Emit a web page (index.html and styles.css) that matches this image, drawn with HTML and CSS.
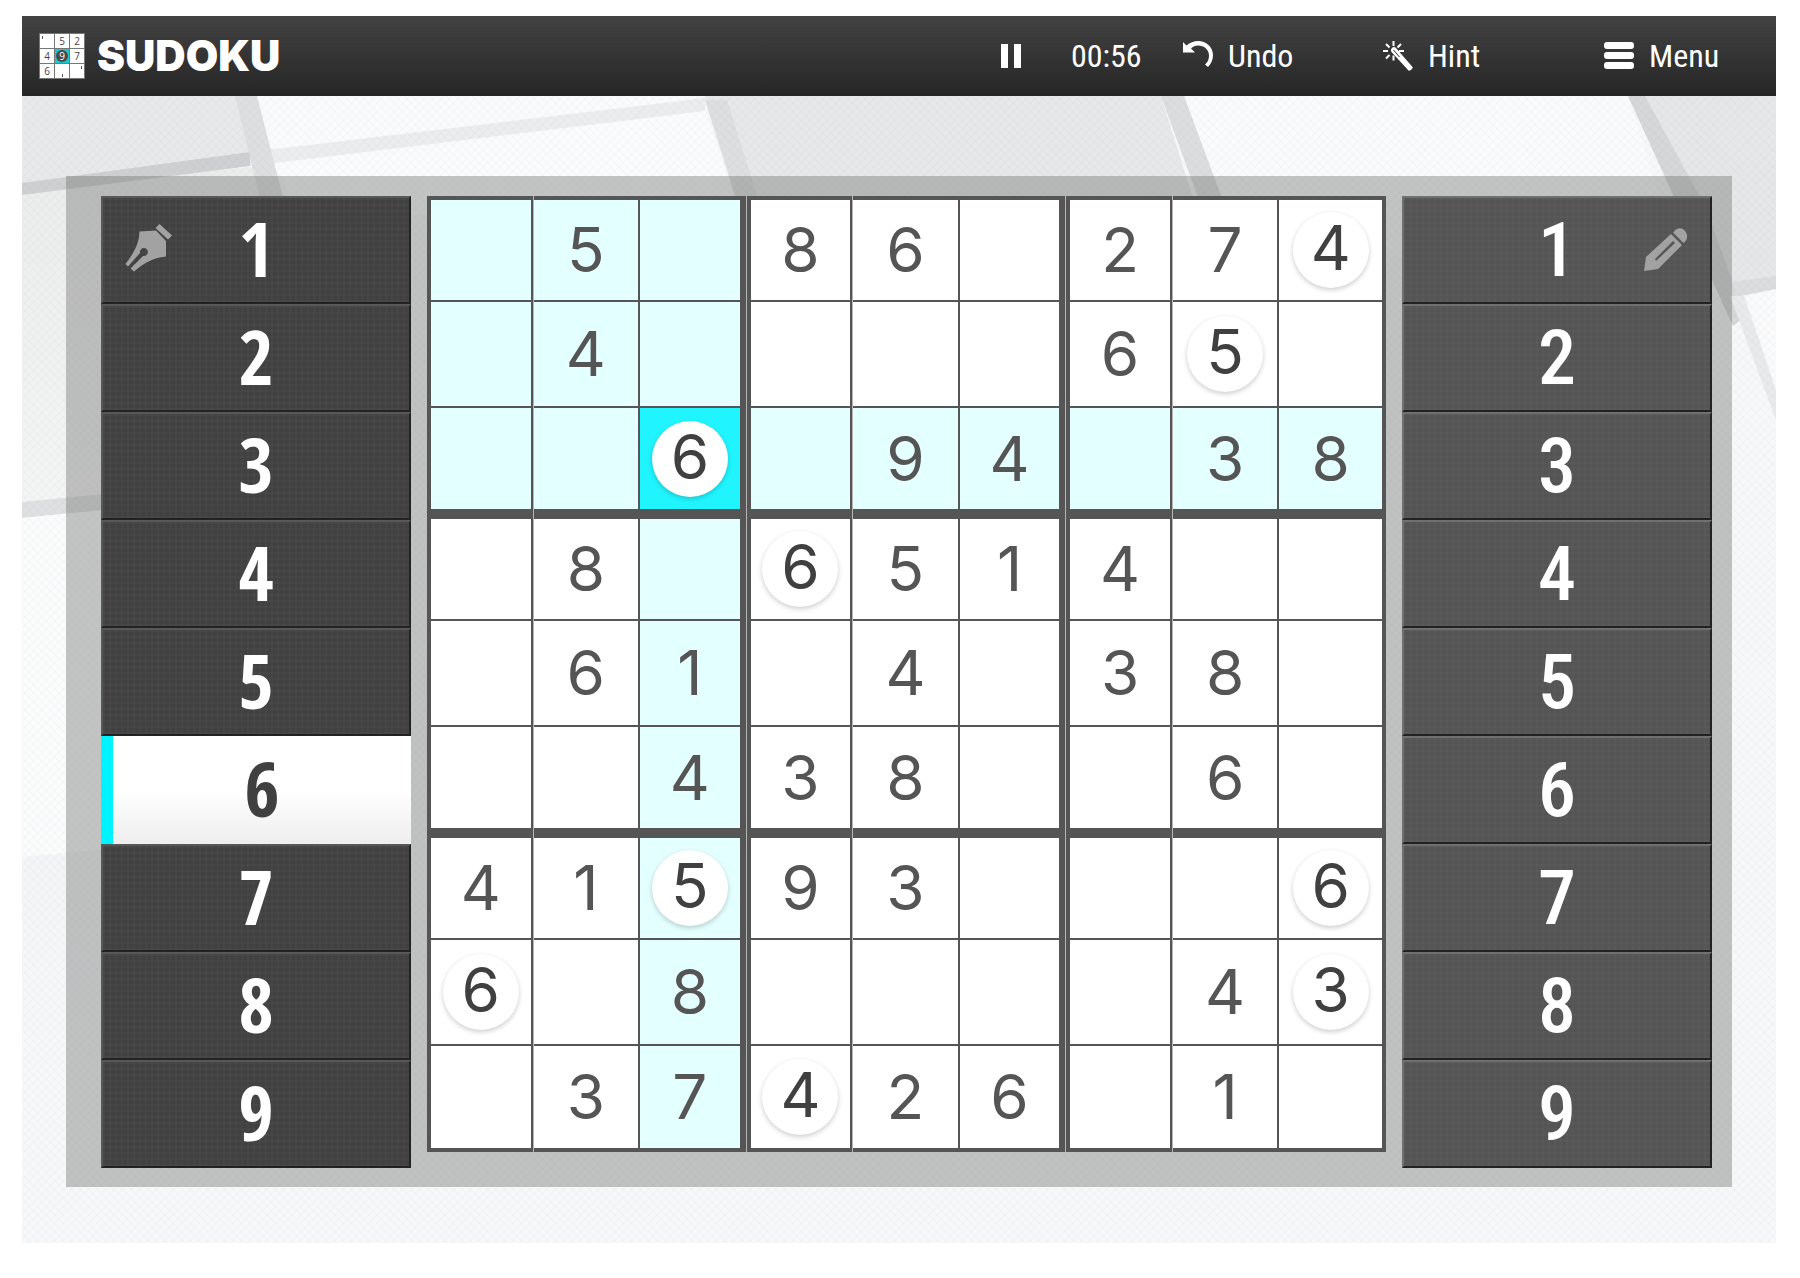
FILE: index.html
```html
<!doctype html>
<html lang="en">
<head>
	<meta charset="UTF-8" />
	<title>Sudoku</title>
	<link rel="stylesheet" href="styles.css">
</head>
<body>

<div class="app">
	<header class="topbar">
		<svg class="logo" viewBox="0 0 46 46" aria-hidden="true">
			<rect width="46" height="46" fill="#777"/>
			<path fill="#fff" d="M1 1h14v14H1zM16 1h14v14H16zM31 1h14v14H31zM1 16h14v14H1zM31 16h14v14H31zM1 31h14v14H1zM16 31h14v14H16zM31 31h14v14H31z"/>
			<rect x="16" y="16" width="14" height="14" fill="#1cc8d2"/>
			<circle cx="23" cy="23" r="6" fill="#4a4a4a"/>
			<g class="logo-digits">
				<text x="23" y="12">5</text><text x="38" y="12">2</text>
				<text x="8" y="27">4</text><text x="23" y="27" fill="#fff">9</text><text x="38" y="27">7</text>
				<text x="8" y="42">6</text>
			</g>
			<path stroke="#555" d="M3.500 3v3M23.500 41v3M42.500 33v3"/>
		</svg>
		<h1>SUDOKU</h1>
		<nav class="tools">
			<button class="pause" aria-label="Pause">
				<svg width="20" height="24" viewBox="0 0 20 24"><path d="M0 0h7v24H0zM13 0h7v24h-7z"/></svg>
			</button>
			<span class="timer">00:56</span>
			<button class="tool undo">
				<svg width="30" height="30" viewBox="0 0 30 30"><path d="M0 1 3.500 4.500C7 1.500 11 0 15 0c8 0 15 6 15 14 0 5-2 9-5 12l-3-2.500C25 21 26 18 26 14.500c0-6-5-10-11-10-3 0-5 1-7 3l4 4H0z"/></svg>
				Undo
			</button>
			<button class="tool hint">
				<svg width="30" height="32" viewBox="0 0 30 32">
					<path fill="none" stroke="#fff" stroke-width="2" d="M10.500 1v5M10.500 15.500v5M0 11h5M16 11h5M3 4l3.500 3.500M18 4l-3.500 3.500M3 18.500 6.500 15"/>
					<path d="M9 8c1-1.500 3-1.500 4 0l16.500 19c1 1.500-2.500 4.500-4 3.500L8.500 12c-1-1.500-.5-3 .5-4z"/>
					<path fill="none" stroke="#333" d="m10.500 10 6 7"/>
				</svg>
				Hint
			</button>
			<button class="tool menu">
				<svg width="30" height="28" viewBox="0 0 30 28"><rect width="30" height="7" rx="3"/><rect y="10" width="30" height="7" rx="3"/><rect y="20" width="30" height="7" rx="3"/></svg>
				Menu
			</button>
		</nav>
	</header>

	<main class="stage">
		<!-- big soft tiles behind the board -->
		<svg class="tiles" viewBox="0 0 1754 1147" preserveAspectRatio="none" aria-hidden="true">
			<defs>
				<linearGradient id="fade" x1="0" y1="0" x2="0" y2="1">
					<stop offset="0" stop-color="#ebecec"/><stop offset="1" stop-color="#f4f5f5"/>
				</linearGradient>
				<linearGradient id="fade2" x1="0" y1="0" x2="0" y2="1">
					<stop offset="0" stop-color="#f4f5f6"/><stop offset="1" stop-color="#f7f8fa"/>
				</linearGradient>
			</defs>
			<path fill="#e8e9ea" d="M0 0h214l20 62L0 92z"/>
			<path fill="url(#fade)" d="M0 92l240-22 100 150v180L0 420z"/>
			<path fill="#fafbfc" d="M232 0h440l18 16-440 66z"/>
			<path fill="#fbfcfd" d="M258 74 683 14l30 90-440 20z"/>
			<path fill="#e7e8e9" d="M683 0h456l50 160H738z"/>
			<path fill="#fafbfc" d="M1162 0h444l50 160h-450z"/>
			<path fill="#e6e7e8" d="M1623 0h131v184l-40 10z"/>
			<path fill="#cfd0d1" d="M0 87 228 56v14L0 99z"/>
			<path fill="#ecedee" d="M228 56 683 2v13L228 70z"/>
			<path fill="#dedfe0" d="M213 0h22l36 140h-24z"/>
			<path fill="#dedfe0" d="M683 4h22l44 140h-22z"/>
			<path fill="#dcddde" d="M1139 0h23l52 140h-24z"/>
			<path fill="#d6d7d8" d="M1606 0h17l60 110 40 110-12 10z"/>
			<path fill="#dcddde" d="M1710 186 1754 180v13l-40 8z"/>
			<path fill="#fbfbfc" d="M1724 200l30-6v100z"/>
			<path fill="#e9eaeb" d="m1708 200 14 0 32 94v30z"/>
			<path fill="#dfe0e1" d="M0 406l144-14v16L0 422z"/>
			<path fill="#fbfcfc" d="M0 422l144-14v340L0 761z"/>
			<path fill="url(#fade2)" d="M0 761l144-13v220H0z"/>
		</svg>
		<div class="panel">
			<div class="keys pen">
				<button>
					<svg width="48" height="48" viewBox="0 0 48 48"><path d="M34.500 0 47 11.500 43 15.500 30.500 4zM14.500 7.500 31 6.500 41 17v15.500C27 34 19 39 9 47.500L5.500 44.500 18 32a4 4 0 1 0-3-3L3 42.500.5 40C8 30 14 21 14.500 7.500z"/></svg>
					<span>1</span>
				</button>
				<button><span>2</span></button>
				<button><span>3</span></button>
				<button><span>4</span></button>
				<button><span>5</span></button>
				<button class="active"><span>6</span></button>
				<button><span>7</span></button>
				<button><span>8</span></button>
				<button><span>9</span></button>
			</div>

			<div class="board">
				<table>
					<tr><td class="lit"></td><td class="lit">5</td><td class="lit"></td><td>8</td><td>6</td><td></td><td>2</td><td>7</td><td><b>4</b></td></tr>
					<tr><td class="lit"></td><td class="lit">4</td><td class="lit"></td><td></td><td></td><td></td><td>6</td><td><b>5</b></td><td></td></tr>
					<tr><td class="lit"></td><td class="lit"></td><td class="selected"><b>6</b></td><td class="lit"></td><td class="lit">9</td><td class="lit">4</td><td class="lit"></td><td class="lit">3</td><td class="lit">8</td></tr>
					<tr><td></td><td>8</td><td class="lit"></td><td><b>6</b></td><td>5</td><td>1</td><td>4</td><td></td><td></td></tr>
					<tr><td></td><td>6</td><td class="lit">1</td><td></td><td>4</td><td></td><td>3</td><td>8</td><td></td></tr>
					<tr><td></td><td></td><td class="lit">4</td><td>3</td><td>8</td><td></td><td></td><td>6</td><td></td></tr>
					<tr><td>4</td><td>1</td><td class="lit"><b>5</b></td><td>9</td><td>3</td><td></td><td></td><td></td><td><b>6</b></td></tr>
					<tr><td><b>6</b></td><td></td><td class="lit">8</td><td></td><td></td><td></td><td></td><td>4</td><td><b>3</b></td></tr>
					<tr><td></td><td>3</td><td class="lit">7</td><td><b>4</b></td><td>2</td><td>6</td><td></td><td>1</td><td></td></tr>
				</table>
			</div>

			<div class="keys pencil">
				<button>
					<span>1</span>
					<svg width="44" height="44" viewBox="0 0 44 44"><path fill-rule="evenodd" d="M27 6 38 17 14 41 0 43 2 29zM29 13 11 31l1 2L31 15zM29 4.500C33-1 38-1 41 3s3 8-1.500 12z"/></svg>
				</button>
				<button><span>2</span></button>
				<button><span>3</span></button>
				<button><span>4</span></button>
				<button><span>5</span></button>
				<button><span>6</span></button>
				<button><span>7</span></button>
				<button><span>8</span></button>
				<button><span>9</span></button>
			</div>
		</div>
	</main>
</div>

</body>
</html>
```
FILE: styles.css
```css
* {
	box-sizing: border-box;
}
body {
	margin: 0;
	padding: 16px 24px 35px 22px;
	background: #fff;
	font-family: "Roboto Condensed", "Open Sans Condensed", "Open Sans", sans-serif;
}
button {
	font: inherit;
	color: inherit;
	background: none;
	border: 0;
	padding: 0;
	cursor: pointer;
}

/* top bar */
.topbar {
	display: flex;
	align-items: center;
	height: 80px;
	padding: 0 44px 0 17px;
	background: linear-gradient(#424242, #262626);
	color: #fff;
}
.topbar h1 {
	margin: 0 0 0 12px;
	font: 900 42px/48px Inter, sans-serif;
}
.logo {
	width: 46px;
	height: 46px;
}
.logo-digits {
	font: 10px "Open Sans", sans-serif;
	fill: #444;
	text-anchor: middle;
}
.tools {
	display: flex;
	align-items: center;
	margin-left: auto;
	font-size: 32px;
	font-weight: 400;
}
.tools svg {
	fill: #fff;
}
.pause {
	display: flex;
	width: 70px;
}
.timer {
	width: 112px;
}
.tool {
	display: flex;
	align-items: center;
	gap: 15px;
}
.undo {
	width: 200px;
}
.hint {
	width: 221px;
}
.menu {
	width: 128px;
}

/* play area */
.stage {
	position: relative;
	padding: 80px 44px 56px;
	background: #f7f8fa;
}
.tiles {
	position: absolute;
	top: 0;
	left: 0;
	width: 100%;
	height: 100%;
}
.stage::before {
	content: "";
	position: absolute;
	inset: 0;
	z-index: 1;
	background:
		repeating-linear-gradient(45deg, rgba(90, 95, 100, 0.02) 0 2px, transparent 2px 6px),
		repeating-linear-gradient(-45deg, rgba(90, 95, 100, 0.02) 0 2px, transparent 2px 6px);
}
.panel {
	position: relative;
	z-index: 2;
	display: flex;
	align-items: flex-start;
	gap: 16px;
	padding: 20px 20px 19px 35px;
	background: rgba(110, 112, 110, 0.4);
}

/* number keys */
.keys {
	flex: 0 0 310px;
	color: #fff;
	font-size: 76px;
	line-height: 80px;
}
.keys button {
	display: grid;
	grid-template-columns: 1fr auto 1fr;
	align-items: center;
	width: 100%;
	height: 108px;
	padding: 0 22px;
	border: 2px solid #222;
	border-top-color: #585858;
	border-left-color: #585858;
	background:
		repeating-linear-gradient(rgba(255, 255, 255, 0.02) 0 2px, transparent 2px 6px),
		repeating-linear-gradient(90deg, rgba(255, 255, 255, 0.02) 0 2px, transparent 2px 6px),
		#414141;
}
.keys span {
	grid-column: 2;
}
.keys svg {
	grid-row: 1;
	fill: #a2a2a2;
}
.pen {
	font-family: "Open Sans Condensed", "Open Sans", sans-serif;
	font-weight: bold;
}
.pen button {
	padding-bottom: 4px;
}
.pen svg {
	grid-column: 1;
}
.pencil {
	font-weight: 500;
}
.pencil svg {
	grid-column: 3;
	justify-self: end;
}
.pencil button {
	border-top-color: #707070;
	border-left-color: #707070;
	background-color: #545454;
}
.keys .active {
	border: 0;
	border-left: 12px solid #00f4ff;
	background: linear-gradient(#fff 50%, #eee);
	color: #404040;
}

/* board */
.board {
	flex: 1;
}
.board table {
	width: 100%;
	table-layout: fixed;
	border-spacing: 0;
	color: #555;
	font: 400 62px/76px Inter, sans-serif;
}
.board td {
	height: 106px;
	padding: 0;
	border: 0 solid #555;
	border-width: 0 2px 2px 0;
	background: #fff;
	text-align: center;
}
.board tr:first-child td {
	border-top-width: 4px;
}
.board tr:nth-child(3n) td {
	height: 111px;
	border-bottom-width: 10px;
}
.board tr:nth-child(3n+4) td {
	height: 102px;
}
.board tr:last-child td {
	height: 106px;
	border-bottom-width: 4px;
}
.board td:nth-child(3n+1) {
	border-left-width: 4px;
	border-right-width: 3px;
}
.board td:nth-child(3n) {
	border-right-width: 7px;
}
.board td:last-child {
	border-right-width: 4px;
}
/* light hairline between the column strips */
.board td:nth-child(3n+2),
.board td:nth-child(3n+4) {
	box-shadow: -1px 0 #b4b5b4;
}
.board td.lit {
	background: #e4ffff;
}
.board td.selected {
	background: #20f5ff;
}
/* digits placed by the player */
.board b {
	display: block;
	width: 76px;
	height: 76px;
	margin: 0 auto;
	border-radius: 50%;
	background: #fff;
	box-shadow: 0 2px 5px rgba(0, 0, 0, 0.2);
	color: #404040;
	font-weight: 400;
	line-height: 72px;
}
```
